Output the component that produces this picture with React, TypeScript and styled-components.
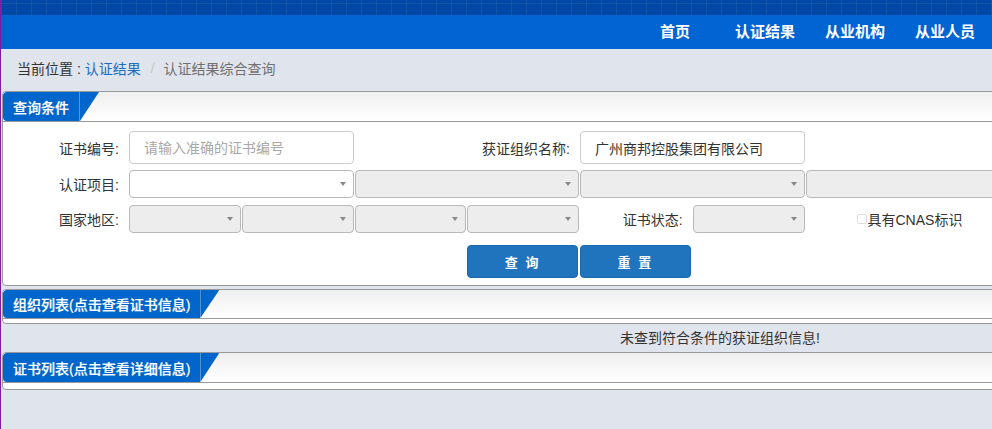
import React from "react";
import styled, { createGlobalStyle } from "styled-components";

const GlobalStyle = createGlobalStyle`
  html, body {
    margin: 0;
    padding: 0;
    overflow: hidden;
    background: #e0e4ec;
  }
  body {
    font-family: "Liberation Sans", "Noto Sans CJK SC", sans-serif;
    font-size: 14px;
    color: #333;
  }
  #root {
    min-height: 100vh;
    border-left: 1px solid #7b1fa2;
    background: #e0e4ec;
  }
  * { box-sizing: border-box; }
`;

const TopBand = styled.div`
  height: 15px;
  background-color: #0047a6;
  background-image:
    repeating-linear-gradient(90deg, rgba(255,255,255,0.07) 0 1px, transparent 1px 15px),
    linear-gradient(180deg, transparent 0 3px, rgba(255,255,255,0.07) 3px 4px, transparent 4px);
`;

const NavBar = styled.nav`
  height: 34px;
  background: #0064d3;
  display: flex;
  justify-content: flex-end;
  align-items: center;
  padding-right: 2px;
`;

const NavItem = styled.a`
  width: 90px;
  text-align: center;
  color: #fff;
  font-size: 15px;
  font-weight: bold;
  text-decoration: none;
  line-height: 34px;
`;

const Breadcrumb = styled.div`
  height: 42px;
  display: flex;
  align-items: center;
  padding: 0 0 4px 16px;
  font-size: 14px;
  color: #333;
`;

const CrumbLink = styled.span`
  color: #1c6dbf;
`;

const CrumbSep = styled.span`
  color: #c8c8c8;
  margin: 0 9px 0 10px;
`;

const CrumbCurrent = styled.span`
  color: #707070;
`;

const Content = styled.div`
  width: 1436px;
  margin-left: 1px;
  display: flex;
  flex-direction: column;
`;

const Panel = styled.section<{ $mt?: number }>`
  border: 1px solid #999;
  border-radius: 4px;
  background: #fff;
  margin-top: ${(p) => p.$mt ?? 0}px;
  overflow: hidden;
`;

const PanelHeader = styled.div<{ $h?: number }>`
  height: ${(p) => (p.$h ?? 29) + 1}px;
  border-bottom: 1px solid #999;
  background: linear-gradient(180deg, #efefef 0%, #ffffff 100%);
  display: flex;
`;

const TabLabel = styled.div<{ $divider?: boolean }>`
  background: #0066cc;
  color: #fff;
  font-size: 14px;
  font-weight: 500;
  display: flex;
  align-items: center;
  padding: 0 10px;
  border-radius: 4px 0 0 4px;
  border-right: ${(p) => (p.$divider ? "1px solid #5a98dc" : "none")};
  white-space: nowrap;
  -webkit-text-stroke: 0.2px #fff;
`;

const TabSlant = styled.div`
  width: 19px;
  background: #0066cc;
  clip-path: polygon(0 0, 100% 0, 0 100%);
`;

const PanelBody = styled.div<{ $h?: number }>`
  height: ${(p) => (p.$h !== undefined ? `${p.$h}px` : "auto")};
`;

const Form = styled.div`
  display: flex;
  flex-direction: column;
  padding: 9px 0 7px;
`;

const FormRow = styled.div<{ $h: number; $mt?: number }>`
  display: grid;
  grid-template-columns: 126px repeat(8, 112.75px);
  height: ${(p) => p.$h}px;
  margin-top: ${(p) => p.$mt ?? 0}px;
  align-items: center;
`;

const Label = styled.label<{ $span?: number }>`
  grid-column: span ${(p) => p.$span ?? 1};
  text-align: right;
  padding-right: 10px;
  font-size: 14px;
  color: #333;
  white-space: nowrap;
`;

const TextInput = styled.input<{ $span?: number }>`
  grid-column: span ${(p) => p.$span ?? 2};
  height: 33px;
  width: calc(100% - 1px);
  border: 1px solid #ccc;
  border-radius: 4px;
  padding: 0 14px;
  font-family: inherit;
  font-size: 14px;
  color: #333;
  outline: none;
  &::placeholder { color: #a8a8a8; }
`;

const SelectBox = styled.div<{ $span?: number; $disabled?: boolean; $noArrow?: boolean }>`
  grid-column: span ${(p) => p.$span ?? 1};
  position: relative;
  height: 28px;
  width: calc(100% - 1px);
  border: 1px solid #b8b8b8;
  border-radius: 4px;
  background: ${(p) => (p.$disabled ? "#ededed" : "#fff")};
  &::after {
    content: "";
    display: ${(p) => (p.$noArrow ? "none" : "block")};
    position: absolute;
    right: 7px;
    top: 11px;
    border-left: 3.5px solid transparent;
    border-right: 3.5px solid transparent;
    border-top: 4px solid #888;
  }
`;

const Spacer = styled.div<{ $span: number }>`
  grid-column: span ${(p) => p.$span};
`;

const CheckCell = styled.label`
  grid-column: span 2;
  display: flex;
  align-items: center;
  padding-left: 51px;
  font-size: 14px;
  color: #333;
`;

const CheckMark = styled.span`
  width: 10px;
  height: 10px;
  border: 1px solid #ddd;
  border-radius: 2px;
  background: #fff;
  margin-right: 1px;
`;

const Button = styled.button`
  height: 33px;
  width: calc(100% - 2px);
  background: #1f74bd;
  color: #fff;
  border: 1px solid #1b68aa;
  border-radius: 4px;
  font-family: inherit;
  font-size: 13px;
  font-weight: bold;
  letter-spacing: 2px;
  cursor: pointer;
`;

const Message = styled.div`
  height: 28px;
  line-height: 28px;
  text-align: center;
  font-size: 14px;
  color: #333;
`;

export default function App() {
  return (
    <>
      <GlobalStyle />
      <TopBand />
      <NavBar>
        <NavItem>首页</NavItem>
        <NavItem>认证结果</NavItem>
        <NavItem>从业机构</NavItem>
        <NavItem>从业人员</NavItem>
      </NavBar>
      <Breadcrumb>
        当前位置 :&nbsp;<CrumbLink>认证结果</CrumbLink>
        <CrumbSep>/</CrumbSep>
        <CrumbCurrent>认证结果综合查询</CrumbCurrent>
      </Breadcrumb>
      <Content>
        <Panel>
          <PanelHeader>
            <TabLabel $divider>查询条件</TabLabel>
            <TabSlant />
          </PanelHeader>
          <PanelBody>
            <Form>
              <FormRow $h={33}>
                <Label>证书编号:</Label>
                <TextInput placeholder="请输入准确的证书编号" />
                <Label $span={2}>获证组织名称:</Label>
                <TextInput defaultValue="广州商邦控股集团有限公司" />
              </FormRow>

              <FormRow $h={28} $mt={6}>
                <Label>认证项目:</Label>
                <SelectBox $span={2} />
                <SelectBox $span={2} $disabled />
                <SelectBox $span={2} $disabled />
                <SelectBox $span={2} $disabled $noArrow />
              </FormRow>

              <FormRow $h={28} $mt={7}>
                <Label>国家地区:</Label>
                <SelectBox $disabled />
                <SelectBox $disabled />
                <SelectBox $disabled />
                <SelectBox $disabled />
                <Label>证书状态:</Label>
                <SelectBox $disabled />
                <CheckCell>
                  <CheckMark />
                  具有CNAS标识
                </CheckCell>
              </FormRow>

              <FormRow $h={33} $mt={12}>
                <Spacer $span={4} />
                <Button>查 询</Button>
                <Button>重 置</Button>
              </FormRow>
            </Form>
          </PanelBody>
        </Panel>

        <Panel $mt={3}>
          <PanelHeader $h={28}>
            <TabLabel>组织列表(点击查看证书信息)</TabLabel>
            <TabSlant />
          </PanelHeader>
          <PanelBody $h={4} />
        </Panel>
        <Message>未查到符合条件的获证组织信息!</Message>
        <Panel>
          <PanelHeader>
            <TabLabel>证书列表(点击查看详细信息)</TabLabel>
            <TabSlant />
          </PanelHeader>
          <PanelBody $h={6} />
        </Panel>
      </Content>
    </>
  );
}
